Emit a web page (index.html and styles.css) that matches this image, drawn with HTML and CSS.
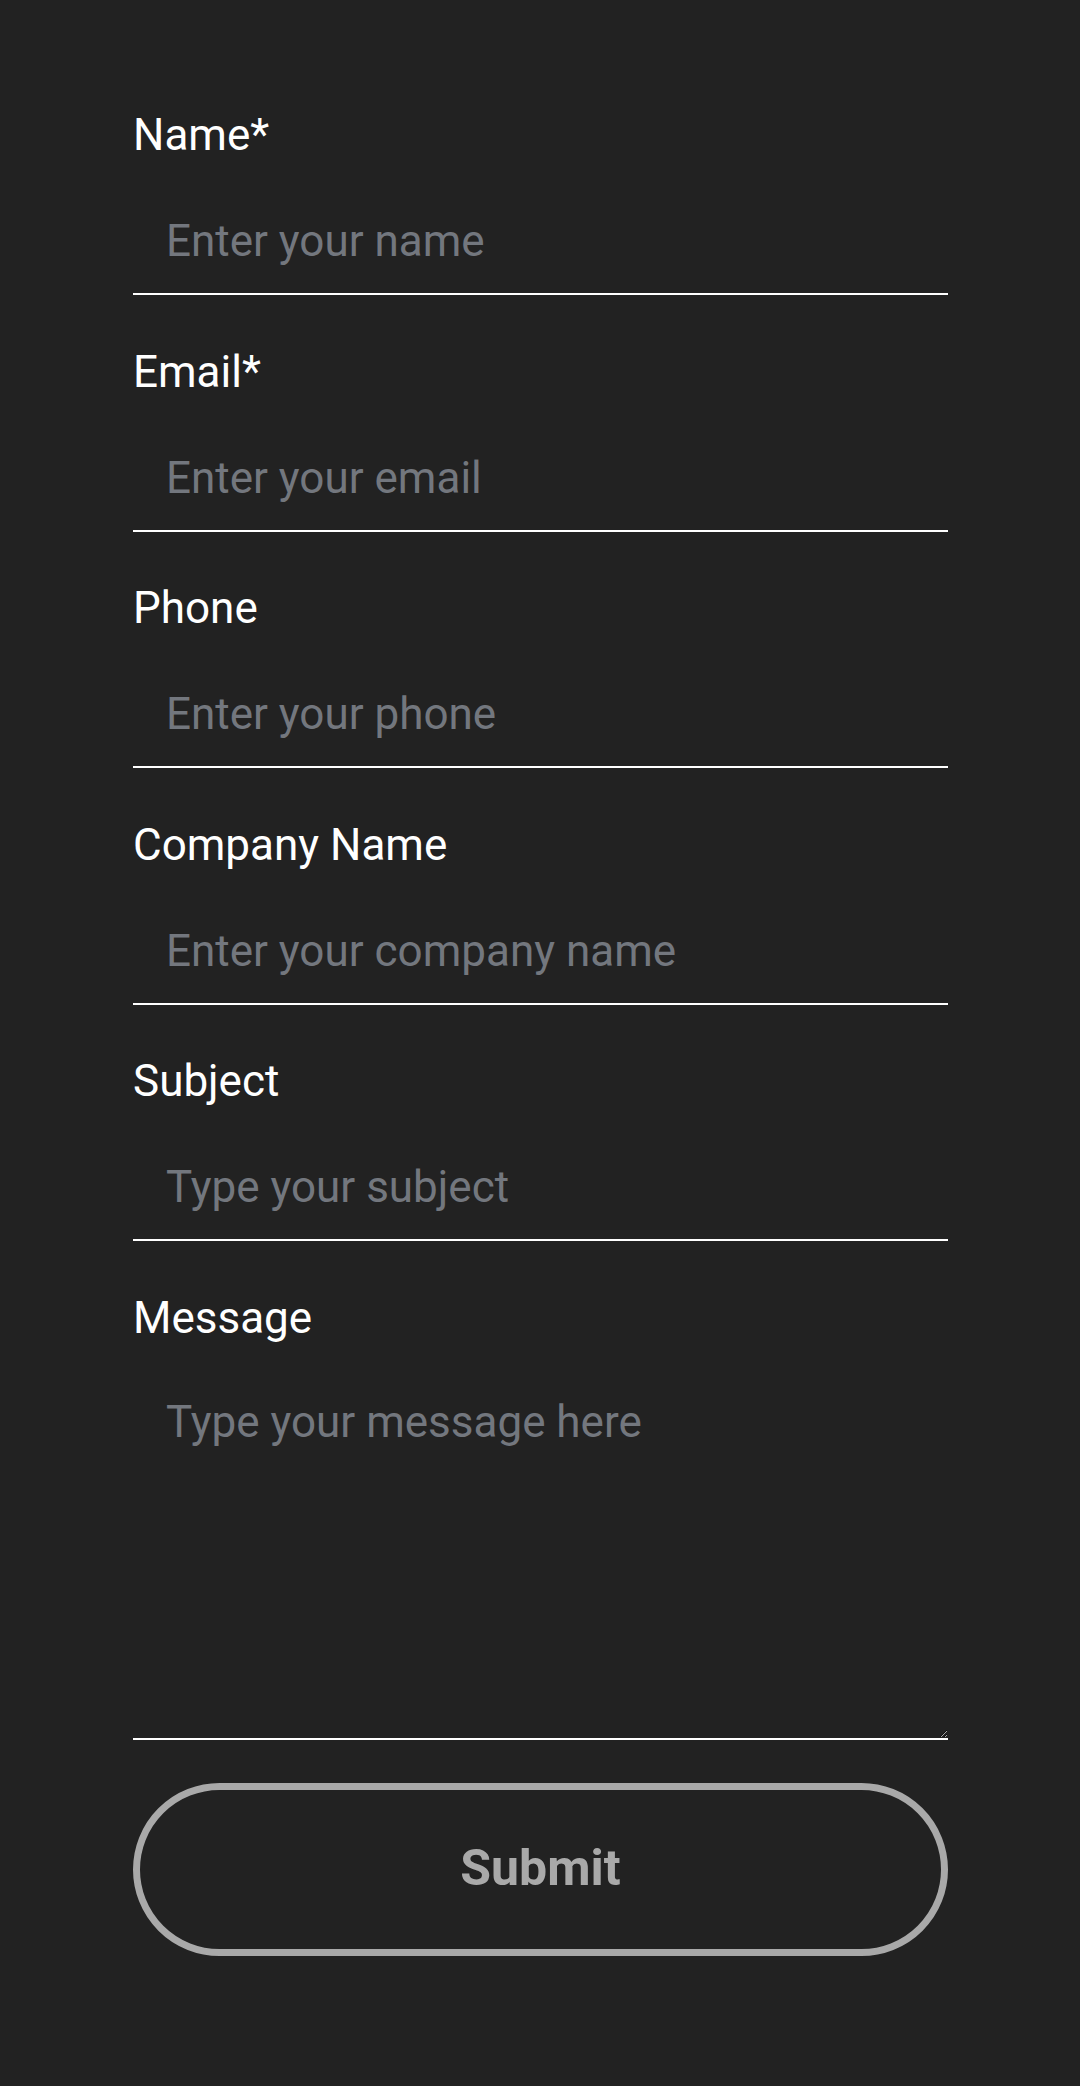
FILE: index.html
```html
<!DOCTYPE html>
<html lang="en">
<head>
<meta charset="utf-8">
<title>Contact form</title>
<link rel="stylesheet" href="styles.css">
</head>
<body>
<form class="contact-form">
  <div class="field">
    <label class="field-label" for="name">Name*</label>
    <input class="field-input" id="name" type="text" placeholder="Enter your name">
  </div>
  <div class="field">
    <label class="field-label" for="email">Email*</label>
    <input class="field-input" id="email" type="email" placeholder="Enter your email">
  </div>
  <div class="field">
    <label class="field-label" for="phone">Phone</label>
    <input class="field-input" id="phone" type="tel" placeholder="Enter your phone">
  </div>
  <div class="field">
    <label class="field-label" for="company">Company Name</label>
    <input class="field-input" id="company" type="text" placeholder="Enter your company name">
  </div>
  <div class="field">
    <label class="field-label" for="subject">Subject</label>
    <input class="field-input" id="subject" type="text" placeholder="Type your subject">
  </div>
  <div class="field field-message">
    <label class="field-label" for="message">Message</label>
    <textarea class="field-input field-textarea" id="message" placeholder="Type your message here"></textarea>
  </div>
  <button class="submit-btn" type="button">Submit</button>
</form>
</body>
</html>
```
FILE: styles.css
```css
html, body {
  margin: 0;
  padding: 0;
  background: #222222;
}

body {
  font-family: Roboto, "Liberation Sans", Arial, sans-serif;
  color: #ffffff;
}

.contact-form {
  display: flex;
  flex-direction: column;
  padding: 109px 132px 0 133px;
  gap: 50.5px;
}

.field {
  display: flex;
  flex-direction: column;
}

.field-label {
  font-size: 44px;
  line-height: 52px;
  color: #ffffff;
  margin-bottom: 28px;
}

.field-input {
  font-family: inherit;
  font-size: 44px;
  line-height: 52px;
  height: 106px;
  box-sizing: border-box;
  width: 100%;
  padding: 26px 33px 26px 33px;
  margin: 0;
  background: transparent;
  color: #ffffff;
  border: none;
  border-bottom: 2px solid #ffffff;
  border-radius: 0;
  outline: none;
}

.field-input::placeholder {
  color: #73777e;
  opacity: 1;
}

.field-textarea {
  height: 368px;
  padding-top: 24px;
  resize: vertical;
  display: block;
}

.submit-btn {
  margin-top: -7px;
  height: 173px;
  width: 100%;
  box-sizing: border-box;
  border: 7px solid #a9a9a9;
  border-radius: 87px;
  background: transparent;
  color: #a9a9a9;
  font-family: inherit;
  font-weight: 700;
  font-size: 50px;
  padding: 0 0 4px 0;
  cursor: pointer;
}
```
